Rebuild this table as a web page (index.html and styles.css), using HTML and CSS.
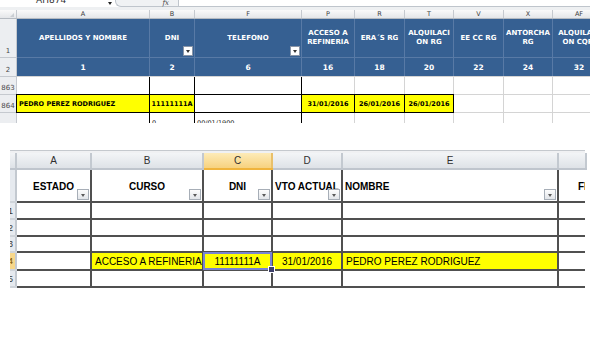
FILE: index.html
```html
<!DOCTYPE html>
<html lang="es">
<head>
<meta charset="utf-8">
<title>Hoja de cálculo</title>
<link rel="stylesheet" href="styles.css">
</head>
<body>
<section class="top">
  <div class="fbar">
    <div class="namebox"><span class="nametext">AH874</span></div>
    <div class="nbarrow"><span class="tri"></span></div>
    <div class="fxbox"><span class="fx">fx</span></div>
    <div class="formula"></div>
  </div>
  <div class="fgap"></div>
  <div class="sheet1">
    <div class="ch corner"></div>
    <div class="ch">A</div><div class="ch">B</div><div class="ch">F</div><div class="ch">P</div><div class="ch">R</div><div class="ch">T</div><div class="ch">V</div><div class="ch">X</div><div class="ch">AF</div>

    <div class="rh">1</div>
    <div class="bh"><span class="lbl">APELLIDOS Y NOMBRE</span></div>
    <div class="bh"><span class="lbl">DNI</span><span class="fb"></span></div>
    <div class="bh"><span class="lbl">TELEFONO</span><span class="fb"></span></div>
    <div class="bh"><span class="lbl">ACCESO A<br>REFINERIA</span></div>
    <div class="bh"><span class="lbl">ERA´S RG</span></div>
    <div class="bh"><span class="lbl">ALQUILACI<br>ON RG</span></div>
    <div class="bh"><span class="lbl">EE CC RG</span></div>
    <div class="bh"><span class="lbl">ANTORCHA<br>RG</span></div>
    <div class="bh"><span class="lbl">ALQUILACI<br>ON CQPI</span></div>

    <div class="rh">2</div>
    <div class="bn">1</div><div class="bn">2</div><div class="bn">6</div><div class="bn">16</div><div class="bn">18</div><div class="bn">20</div><div class="bn">22</div><div class="bn">24</div><div class="bn">32</div>

    <div class="rh">863</div>
    <div class="c bk-rb"></div><div class="c bk-rb"></div><div class="c bk-rb"></div>
    <div class="c"></div><div class="c"></div><div class="c"></div><div class="c"></div><div class="c"></div><div class="c"></div>

    <div class="rh">864</div>
    <div class="c y pl">PEDRO PEREZ RODRIGUEZ</div>
    <div class="c y ctr">11111111A</div>
    <div class="c bk-rb"></div>
    <div class="c y ctr">31/01/2016</div>
    <div class="c y ctr">26/01/2016</div>
    <div class="c y ctr">26/01/2016</div>
    <div class="c"></div><div class="c"></div><div class="c"></div>

    <div class="rh"></div>
    <div class="c bk-r"></div>
    <div class="c bk-r part">0</div>
    <div class="c bk-r part">00/01/1900</div>
    <div class="c"></div><div class="c"></div><div class="c"></div><div class="c"></div><div class="c"></div><div class="c"></div>
  </div>
</section>

<section class="bottom">
  <div class="strip"></div>
  <div class="sheet2">
    <div class="ch2"></div>
    <div class="ch2">A</div><div class="ch2">B</div><div class="ch2 sel">C</div><div class="ch2">D</div><div class="ch2">E</div><div class="ch2"></div>

    <div class="rh2"></div>
    <div class="hd">ESTADO<span class="fb2"></span></div>
    <div class="hd">CURSO<span class="fb2"></span></div>
    <div class="hd">DNI<span class="fb2"></span></div>
    <div class="hd">VTO ACTUAL<span class="fb2"></span></div>
    <div class="hd left">NOMBRE<span class="fb2"></span></div>
    <div class="hd far">FIN</div>

    <div class="rh2"><span class="rn">1</span></div>
    <div class="d"></div><div class="d"></div><div class="d"></div><div class="d"></div><div class="d"></div><div class="d"></div>

    <div class="rh2"><span class="rn">2</span></div>
    <div class="d"></div><div class="d"></div><div class="d"></div><div class="d"></div><div class="d"></div><div class="d"></div>

    <div class="rh2"><span class="rn">3</span></div>
    <div class="d"></div><div class="d"></div><div class="d"></div><div class="d"></div><div class="d"></div><div class="d"></div>

    <div class="rh2 sel"><span class="rn">4</span></div>
    <div class="d"></div>
    <div class="d y2 l">ACCESO A REFINERIA</div>
    <div class="d y2 ctr cur">11111111A</div>
    <div class="d y2 ctr">31/01/2016</div>
    <div class="d y2 l">PEDRO PEREZ RODRIGUEZ</div>
    <div class="d"></div>

    <div class="rh2"><span class="rn">5</span></div>
    <div class="d"></div><div class="d"></div><div class="d"></div><div class="d"></div><div class="d"></div><div class="d"></div>
  </div>
</section>
</body>
</html>
```
FILE: styles.css
```css
* { box-sizing: border-box; margin: 0; padding: 0; }
html, body { background: #fff; }
body {
  width: 600px;
  height: 361px;
  overflow: hidden;
  font-family: "DejaVu Sans", Verdana, sans-serif;
  color: #000;
}

/* ---------- top capture ---------- */
.top { width: 590px; height: 123px; overflow: hidden; }

.fbar { display: flex; height: 7px; overflow: hidden; background: #fff; }
.namebox { width: 104px; overflow: hidden; padding-left: 36px; }
.nametext { display: block; font-size: 9px; line-height: 10px; margin-top: -5px; color: #333; }
.nbarrow { width: 11px; display: flex; justify-content: center; padding-top: 2px; }
.tri {
  width: 0; height: 0;
  border-left: 2.5px solid transparent;
  border-right: 2.5px solid transparent;
  border-top: 3px solid #222;
}
.fxbox {
  width: 63px;
  background: #f0f2f4;
  border-left: 1px solid #bfc5cc;
  border-bottom: 1px solid #bfc5cc;
  border-radius: 0 0 0 6px;
  display: flex;
  justify-content: flex-end;
  padding-right: 9px;
}
.fx { font-family: "DejaVu Serif", serif; font-style: italic; font-size: 7px; line-height: 6px; color: #444; }
.formula { flex: 1; background: #fff; border-left: 1px solid #bfc5cc; border-bottom: 1px solid #bfc5cc; }
.fgap { height: 3px; background: #eef0f2; }

.sheet1 {
  display: grid;
  grid-template-columns: 16px 132px 44px 106px 52px 49px 48px 49px 48px 52px;
  grid-template-rows: 8px 38px 18px 17px 17px 10px;
  gap: 1px;
  background: #d4d4d4;
  width: max-content;
}
.ch {
  background: linear-gradient(#fafafa, #e4e6e9);
  font-size: 6.5px;
  line-height: 8px;
  color: #3c3c3c;
  text-align: center;
  box-shadow: 1px 0 0 #c5c9cf, 0 1px 0 #b5bac1, 1px 1px 0 #b5bac1;
}
.corner { position: relative; }
.corner::after {
  content: "";
  position: absolute;
  right: 2px; bottom: 1px;
  border-left: 4px solid transparent;
  border-bottom: 4px solid #c9cdd2;
}
.rh {
  background: #eceef1;
  font-size: 7px;
  line-height: 8px;
  color: #4a4a4a;
  display: flex;
  align-items: flex-end;
  justify-content: center;
  padding-bottom: 2px;
  box-shadow: 1px 0 0 #c5c9cf, 0 1px 0 #c5c9cf, 1px 1px 0 #c5c9cf;
}
.bh {
  position: relative;
  background: #366092;
  color: #fff;
  font-weight: bold;
  font-size: 7px;
  line-height: 9px;
  display: flex;
  align-items: center;
  justify-content: center;
  text-align: center;
  box-shadow: 1px 0 0 #587aa6, 0 1px 0 #587aa6, 1px 1px 0 #587aa6;
}
.lbl { white-space: nowrap; }
.bn {
  background: #366092;
  color: #fff;
  font-weight: bold;
  font-size: 7.5px;
  display: flex;
  align-items: center;
  justify-content: center;
  box-shadow: 1px 0 0 #587aa6;
}
.fb {
  position: absolute;
  right: 1px; bottom: 1px;
  width: 10px; height: 10px;
  background: #fff;
  border: 1px solid #8a96a8;
}
.fb::after {
  content: "";
  position: absolute;
  left: 2px; top: 3px;
  border-left: 2.5px solid transparent;
  border-right: 2.5px solid transparent;
  border-top: 3px solid #333;
}
.c {
  background: #fff;
  font-size: 6.5px;
  display: flex;
  align-items: center;
  overflow: hidden;
  white-space: nowrap;
}
.y { background: #ffff00; font-weight: bold; box-shadow: 0 0 0 1px #000; }
.bk-rb { box-shadow: 1px 0 0 #000, 0 1px 0 #000, 1px 1px 0 #000; }
.bk-r { box-shadow: 1px 0 0 #000; }
.ctr { justify-content: center; }
.pl { padding-left: 2px; }
.part { align-items: flex-start; padding-top: 6px; padding-left: 2px; color: #222; }

/* ---------- bottom capture ---------- */
.bottom { margin-top: 27px; margin-left: 10px; width: 575px; }
.strip { height: 3px; background: #f0f1f3; border-top: 1px solid #c5c9ce; }
.sheet2 {
  display: grid;
  grid-template-columns: 5px 73px 110px 67px 68px 214px 26px;
  grid-template-rows: 15px 31px 15px 15px 14px 16px 15px;
  gap: 2px;
  background: #505050;
  padding-bottom: 2px;
  font-family: "Liberation Sans", Arial, sans-serif;
}
.ch2 {
  background: linear-gradient(#f3f5f7, #dee2e7);
  font-size: 10px;
  color: #2f2f2f;
  display: flex;
  align-items: center;
  justify-content: center;
  box-shadow: 2px 0 0 #c3c9d0, 0 2px 0 #bfc5cd, 2px 2px 0 #bfc5cd;
}
.ch2.sel {
  background: linear-gradient(#fdebb8, #f7d27f);
  box-shadow: 2px 0 0 #e9c06a, 0 2px 0 #f0b43c, 2px 2px 0 #f0b43c;
}
.rh2 {
  background: #e6eaef;
  font-size: 9px;
  color: #3a3a3a;
  display: flex;
  align-items: center;
  overflow: hidden;
  box-shadow: 2px 0 0 #c3c9d0, 0 2px 0 #cfd4da, 2px 2px 0 #cfd4da;
}
.rn { margin-left: -2px; }
.rh2.sel { background: #f7d78a; color: #7a4f00; }
.hd {
  position: relative;
  background: #fff;
  font-weight: bold;
  font-size: 10px;
  line-height: 12px;
  display: flex;
  align-items: flex-end;
  justify-content: center;
  padding-bottom: 8px;
  white-space: nowrap;
  overflow: hidden;
}
.hd.left { justify-content: flex-start; padding-left: 2px; }
.hd.far { justify-content: flex-start; padding-left: 19px; }
.fb2 {
  position: absolute;
  right: 1px; bottom: 1px;
  width: 12px; height: 11px;
  border: 1px solid #a7aeb7;
  background: linear-gradient(#fdfdfd, #e2e5e9);
}
.fb2::after {
  content: "";
  position: absolute;
  left: 3px; top: 4px;
  border-left: 2.5px solid transparent;
  border-right: 2.5px solid transparent;
  border-top: 3px solid #5a5a5a;
}
.d {
  background: #fff;
  font-size: 10px;
  display: flex;
  align-items: center;
  white-space: nowrap;
  overflow: hidden;
}
.d.y2 { background: #ffff00; }
.d.l { padding-left: 3px; }
.d.ctr { justify-content: center; }
.d.cur {
  position: relative;
  overflow: visible;
  z-index: 1;
  box-shadow: 0 0 0 1px #7884d4, inset 0 0 0 1px #7884d4;
}
.d.cur::after {
  content: "";
  position: absolute;
  right: -4px; bottom: -4px;
  width: 5px; height: 5px;
  background: #3d3f6a;
  border: 1px solid #fff;
}
```
